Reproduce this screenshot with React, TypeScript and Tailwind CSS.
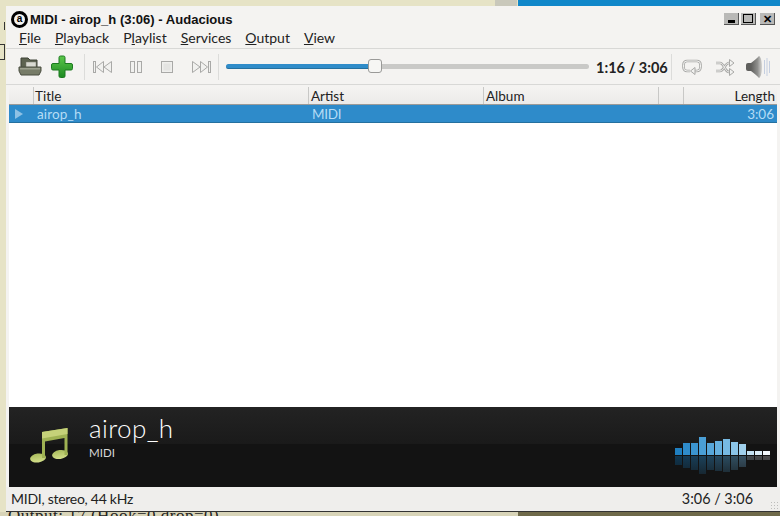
import React from 'react';

const font = { fontFamily: 'Lato, sans-serif' };

const bars = [
  { up: 7, down: 9, color: 'bg-[#1f7fc0]', dim: 'bg-[#0f3650]' },
  { up: 12, down: 12, color: 'bg-[#2f8ccb]', dim: 'bg-[#143a54]' },
  { up: 12, down: 14, color: 'bg-[#3b95d0]', dim: 'bg-[#183e57]' },
  { up: 18, down: 18, color: 'bg-[#4a9fd6]', dim: 'bg-[#1c425b]' },
  { up: 12, down: 14, color: 'bg-[#57a7da]', dim: 'bg-[#20455d]' },
  { up: 14, down: 15, color: 'bg-[#66b0de]', dim: 'bg-[#25485f]' },
  { up: 16, down: 16, color: 'bg-[#77bae3]', dim: 'bg-[#2b4c60]' },
  { up: 13, down: 14, color: 'bg-[#8bc5e8]', dim: 'bg-[#314f61]' },
  { up: 11, down: 11, color: 'bg-[#a0d0ec]', dim: 'bg-[#385263]' },
  { up: 4, down: 4, color: 'bg-[#c4e2f3]', dim: 'bg-[#43494d]' },
  { up: 4, down: 4, color: 'bg-[#dceef8]', dim: 'bg-[#474a4c]' },
  { up: 4, down: 4, color: 'bg-[#f2f8fc]', dim: 'bg-[#4c4d4e]' },
];

const Sep = () => <div className="w-px h-[26px] bg-[#dcdcda] mx-[3px]" />;

const Prev = () => (
  <svg width="22" height="16" viewBox="0 0 22 16" fill="#f1f1ef" stroke="#a9a9a7" strokeWidth="1">
    <rect x="1.5" y="2.5" width="2" height="11" />
    <path d="M11.5 2.5v11l-7-5.500zM19.500 2.500v11l-7.500-5.500z" />
  </svg>
);

const Next = () => (
  <svg width="22" height="16" viewBox="0 0 22 16" fill="#f1f1ef" stroke="#a9a9a7" strokeWidth="1">
    <path d="M2.500 2.500v11l7.500-5.500zM10.500 2.500v11l7-5.500z" />
    <rect x="18.500" y="2.500" width="2" height="11" />
  </svg>
);

const Pause = () => (
  <svg width="14" height="16" viewBox="0 0 14 16" fill="#f1f1ef" stroke="#a9a9a7" strokeWidth="1">
    <rect x="1.500" y="2.500" width="4" height="11" />
    <rect x="8.500" y="2.500" width="4" height="11" />
  </svg>
);

const Stop = () => (
  <svg width="14" height="14" viewBox="0 0 14 14" fill="#efefed" stroke="#a9a9a7" strokeWidth="1">
    <rect x="1.500" y="1.500" width="11" height="11" />
    <rect x="3.500" y="3.500" width="7" height="7" fill="#e4e4e2" stroke="none" />
  </svg>
);

const Open = () => (
  <svg width="24" height="22" viewBox="0 0 24 22">
    <path d="M3 2h7l2 2h7v8H3z" fill="#5d6350" stroke="#3f4337" />
    <rect x="8" y="6" width="10" height="6" fill="#d9dad2" stroke="#777a6c" strokeWidth="0.5" />
    <path d="M1 11h22v4l-2 4H3l-2-4z" fill="#777c68" stroke="#4b4e41" />
    <rect x="2" y="12" width="20" height="1.500" fill="#9da18f" />
  </svg>
);

const Plus = () => (
  <svg width="24" height="24" viewBox="0 0 24 24">
    <defs>
      <linearGradient id="plus" x1="0" y1="0" x2="0" y2="1">
        <stop offset="0" stopColor="#5cc84a" />
        <stop offset="1" stopColor="#1d8a22" />
      </linearGradient>
    </defs>
    <path d="M9 2.500a1.500 1.500 0 0 1 1.500-1.500h3a1.500 1.500 0 0 1 1.500 1.500V8.500h6a1.500 1.500 0 0 1 1.500 1.500v3.500a1.500 1.500 0 0 1-1.500 1.500h-6v6a1.500 1.500 0 0 1-1.500 1.500h-3a1.500 1.500 0 0 1-1.500-1.500v-6H3a1.500 1.500 0 0 1-1.500-1.500V10A1.500 1.500 0 0 1 3 8.500h6z" fill="url(#plus)" stroke="#1c7a20" />
  </svg>
);

const Repeat = () => (
  <svg width="20" height="18" viewBox="0 0 20 18" fill="none" strokeLinejoin="round">
    <path d="M8 13H5a3.500 3.500 0 0 1-3.500-3.500v-3A3.500 3.500 0 0 1 5 3h10a3.500 3.500 0 0 1 3.500 3.500v3A3.500 3.500 0 0 1 15 13h-3" stroke="#a8a8a6" strokeWidth="2.600" />
    <path d="M8 13H5a3.500 3.500 0 0 1-3.500-3.500v-3A3.500 3.500 0 0 1 5 3h10a3.500 3.500 0 0 1 3.500 3.500v3A3.500 3.500 0 0 1 15 13h-3" stroke="#f2f2f0" strokeWidth="1" />
    <path d="M13 9.500l-4.500 3.500 4.500 3.500z" fill="#f2f2f0" stroke="#a8a8a6" />
  </svg>
);

const Shuffle = () => (
  <svg width="20" height="18" viewBox="0 0 20 18" fill="none">
    <path d="M1 5h4c4 0 5 9 9 9h2M1 13h4c4 0 5-8 9-8h2" stroke="#a8a8a6" strokeWidth="2.600" />
    <path d="M1 5h4c4 0 5 9 9 9h2M1 13h4c4 0 5-8 9-8h2" stroke="#f2f2f0" strokeWidth="1" />
    <path d="M14.500 1.500l4.500 3.500-4.500 3.500zM14.500 10.500l4.500 3.500-4.500 3.500z" fill="#f2f2f0" stroke="#a8a8a6" />
  </svg>
);

const Volume = () => (
  <svg width="26" height="24" viewBox="0 0 26 24">
    <defs>
      <linearGradient id="cone" x1="0" y1="0" x2="1" y2="0">
        <stop offset="0" stopColor="#5f5f5d" />
        <stop offset="0.6" stopColor="#8f8f8d" />
        <stop offset="1" stopColor="#d4d4d2" />
      </linearGradient>
    </defs>
    <rect x="1" y="8" width="7" height="8" fill="#5f5f5d" rx="2" />
    <path d="M6 8c3-2 6-5 8-7 2 1 3 6 3 11s-1 10-3 11c-2-2-5-5-8-7z" fill="url(#cone)" />
    <path d="M19.500 5v14M22 3v18M24.500 6v12" stroke="#c5cfe0" strokeWidth="1" />
  </svg>
);

const Note = () => (
  <svg width="42" height="40" viewBox="0 0 42 40">
    <defs>
      <linearGradient id="note" x1="0" y1="0" x2="0" y2="1">
        <stop offset="0" stopColor="#a9bb5c" />
        <stop offset="1" stopColor="#d3df8a" />
      </linearGradient>
    </defs>
    <ellipse cx="9" cy="32" rx="8" ry="4.500" fill="url(#note)" transform="rotate(-8 9 32)" />
    <ellipse cx="31" cy="28.500" rx="8" ry="4.500" fill="url(#note)" transform="rotate(-8 31 28.500)" />
    <path d="M13 32V6L38.500 2v27h-3V12L16 15.500V32z" fill="#9fb253" />
    <path d="M13 6L38.500 2v6L13 12.500z" fill="#c5d179" />
  </svg>
);

const WindowButton = ({ children }: { children: React.ReactNode }) => (
  <div className="w-[15px] h-[12px] bg-[#b9b9b7] border-r border-b border-[#555] flex items-center justify-center">
    {children}
  </div>
);

const App: React.FC = () => {
  return (
    <div className="relative w-[780px] h-[516px] overflow-hidden bg-[#e6e3c6]">
      {/* desktop behind the window */}
      <div className="absolute left-[518px] top-0 w-[262px] h-[6px] bg-[#1087c9]" />
      <div className="absolute left-[495px] top-0 w-[22px] h-[6px] bg-[#c9c8bb]" />
      <div className="absolute left-0 top-[22px] w-[5px] h-[8px] border-r border-[#333]" />
      <div className="absolute left-0 top-[44px] w-[5px] h-[16px] border border-l-0 border-[#333]" />
      <div className="absolute left-0 top-[512px] w-[518px] h-[4px] bg-[#d8d4b8] overflow-hidden">
        <div className="ml-[8px] -mt-[5px] text-[17px] leading-none text-[#222] tracking-[0.5px] whitespace-nowrap" style={{ fontFamily: 'Liberation Serif, serif' }}>Output: 17 (Hook=0 drop=0)</div>
      </div>
      <div className="absolute left-[518px] top-[512px] w-[262px] h-[4px] bg-[#6f6a4a]" />
      <div className="absolute left-[6px] top-[511px] w-[774px] h-px bg-[#333] z-10" />

      <div className="absolute left-[6px] top-[6px] w-[774px] h-[505px] bg-[#f4f3f1] flex flex-col" style={font}>
        <div className="h-[22px] flex items-center pt-[6px] pl-[5px] pr-[5px] shrink-0">
          <div className="w-[17px] h-[17px] -mt-[2px] rounded-full border-[3px] border-black flex items-center justify-center text-[10px] font-bold leading-none mr-[2px]" style={{ fontFamily: 'Liberation Sans' }}>a</div>
          <span className="text-[13.050px] font-bold text-[#111] leading-none" style={{ fontFamily: 'Liberation Sans' }}>MIDI - airop_h (3:06) - Audacious</span>
          <div className="ml-auto flex -mt-[2px]">
            <WindowButton><div className="w-[7px] h-[3px] bg-black mt-[6px]" /></WindowButton>
            <div className="w-[2px]" />
            <WindowButton><div className="w-[10px] h-[9px] border border-black" /></WindowButton>
            <div className="w-[4px]" />
            <WindowButton><span className="text-[11px] leading-none font-bold text-black">✕</span></WindowButton>
          </div>
        </div>

        <div className="h-[20px] flex items-center pl-[13px] gap-[14px] text-[14px] text-[#222] shrink-0 leading-none">
          <span><span className="underline">F</span>ile</span>
          <span><span className="underline">P</span>layback</span>
          <span>P<span className="underline">l</span>aylist</span>
          <span><span className="underline">S</span>ervices</span>
          <span><span className="underline">O</span>utput</span>
          <span><span className="underline">V</span>iew</span>
        </div>

        <div className="h-[37px] flex items-center border-t border-b border-[#d8d8d6] pl-[12px] shrink-0">
          <Open />
          <div className="w-[8px]" />
          <Plus />
          <div className="w-[7px]" />
          <Sep />
          <div className="w-[4px]" />
          <Prev />
          <div className="w-[15px]" />
          <Pause />
          <div className="w-[17px]" />
          <Stop />
          <div className="w-[16px]" />
          <Next />
          <div className="w-[3px]" />
          <Sep />
          <div className="relative w-[363px] h-[5px] ml-[4px] rounded-full bg-[#c9c9c7]">
            <div className="w-[150px] h-full rounded-full bg-[#2f8cc9] border-b border-[#24709f]" />
            <div className="absolute left-[142px] top-[-5px] w-[14px] h-[14px] rounded-[3px] bg-[#f6f6f4] border border-[#9a9a98]" />
          </div>
          <span className="ml-[7px] mt-[4px] text-[14.500px] font-bold text-[#222] leading-none">1:16 / 3:06</span>
          <Sep />
          <div className="w-[7px]" />
          <Repeat />
          <div className="w-[13px]" />
          <Shuffle />
          <div className="w-[10px]" />
          <Volume />
        </div>

        <div className="mx-[3px] flex-1 bg-white flex flex-col min-h-0 mt-[2px]">
          <div className="h-[18px] flex text-[13.500px] text-[#222] leading-none shrink-0 bg-gradient-to-b from-[#f4f3f1] to-[#ecebe9] border-b border-[#9a9a98]">
            <div className="w-[25px] border-r border-[#c8c8c6]" />
            <div className="w-[275px] border-r border-[#c8c8c6] pl-[1px] pt-[3px]">Title</div>
            <div className="w-[175px] border-r border-[#c8c8c6] pl-[2px] pt-[3px]">Artist</div>
            <div className="w-[175px] border-r border-[#c8c8c6] pl-[2px] pt-[3px]">Album</div>
            <div className="w-[25px] border-r border-[#c8c8c6]" />
            <div className="flex-1 text-right pr-[2px] pt-[3px]">Length</div>
          </div>
          <div className="h-[18px] flex items-center pt-[2px] bg-[#2e8bca] border-b border-[#24709f] text-[13.500px] text-[#b5dcf5] leading-none shrink-0">
            <div className="w-[25px] pl-[6px] -mt-[2px]">
              <div className="w-0 h-0 border-y-[5px] border-y-transparent border-l-[8px] border-l-[#8fc1e4]" />
            </div>
            <div className="w-[275px] pl-[3px] tracking-[0.15px]">airop_h</div>
            <div className="w-[175px] pl-[3px] tracking-[-0.3px]">MIDI</div>
            <div className="flex-1 text-right pr-[3px]">3:06</div>
          </div>
          <div className="flex-1" />
          <div className="h-[80px] bg-[#131313] flex items-center shrink-0 relative">
            <div className="absolute inset-x-0 top-0 h-[37px] bg-gradient-to-b from-[#232323] to-[#1a1a1a]" />
            <div className="relative ml-[20px] -mt-[2px]"><Note /></div>
            <div className="relative ml-[18px] flex flex-col -mt-[20px]">
              <span className="text-[26px] font-light leading-none text-white tracking-[0.4px]">airop_h</span>
              <span className="text-[11.500px] leading-none text-[#d8d8d8] mt-[6px]">MIDI</span>
            </div>
            <div className="relative ml-auto mr-[7px] mt-[17px] flex gap-px items-center">
              {bars.map((b, i) => (
                <div key={i} className="w-[7px] flex flex-col gap-px items-stretch">
                  <div className="h-[22px] flex items-end"><div className={`w-full ${b.color}`} style={{ height: b.up }} /></div>
                  <div className="h-[22px]"><div className={`w-full ${b.dim}`} style={{ height: b.down }} /></div>
                </div>
              ))}
              <div className="absolute inset-x-0 top-[23px] h-[22px] bg-gradient-to-b from-transparent to-[#131313]/70" />
            </div>
          </div>
        </div>

        <div className="h-[24px] flex items-center justify-between pl-[5px] pr-[27px] text-[14px] text-[#222] leading-none shrink-0 bg-[#efeeec] relative">
          <span className="tracking-[-0.27px]">MIDI, stereo, 44 kHz</span>
          <span className="text-[14.400px]">3:06 / 3:06</span>
          <div className="absolute right-[1px] bottom-[1px] w-[9px] h-[9px] bg-[radial-gradient(#bdbdbb_1px,transparent_1px)] bg-[length:3px_3px]" />
        </div>
      </div>
    </div>
  );
};

export default App;
